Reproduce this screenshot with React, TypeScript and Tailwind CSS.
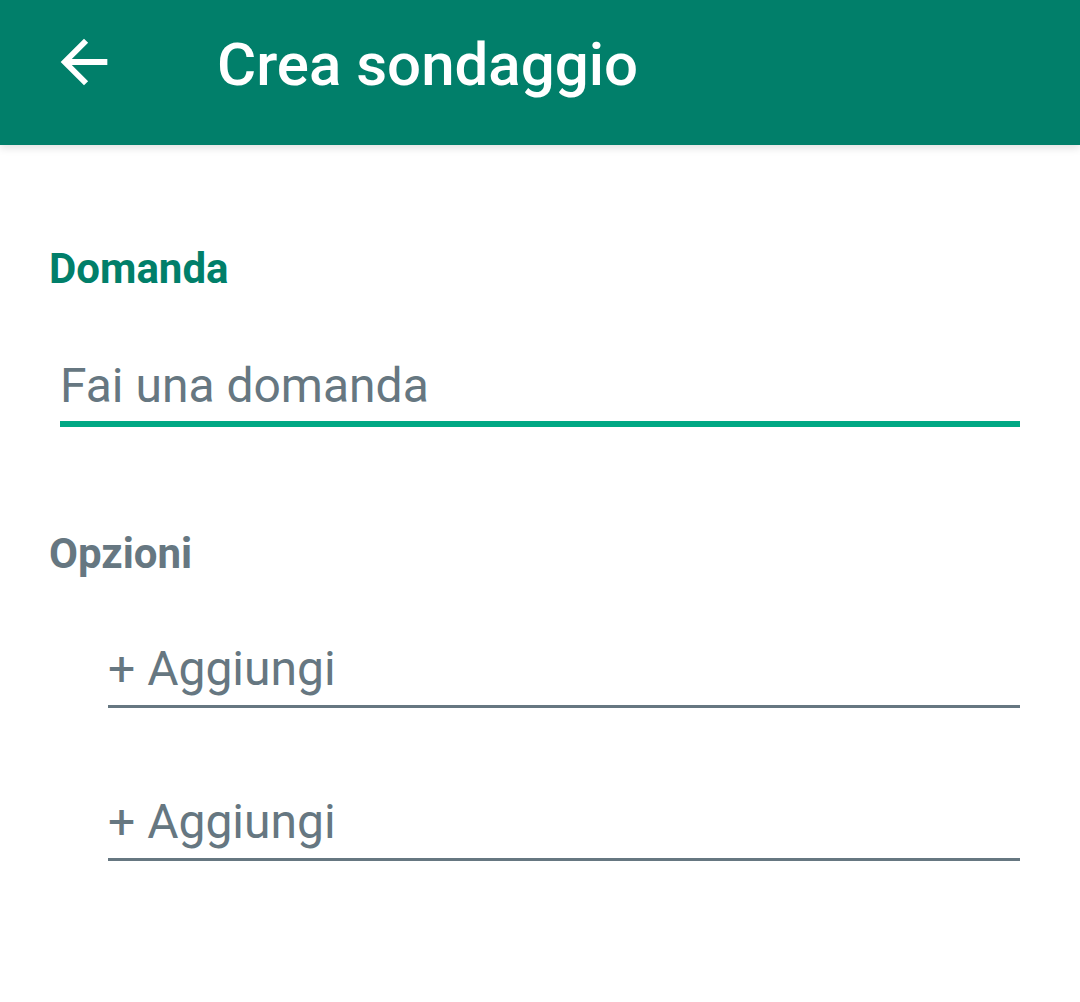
export default function App() {
  return (
    <div className="w-[1080px] h-[1002px] bg-white overflow-hidden font-['Roboto',sans-serif]">
      <header className="relative h-[145px] bg-[#017f6a] flex items-start shadow-[0_3px_8px_rgba(0,0,0,0.12)]">
        <div className="w-[217px] pl-[49px] pt-[27px] flex">
          <svg width="70" height="70" viewBox="0 0 24 24" fill="white">
            <path d="M20 11H7.83l5.59-5.59L12 4l-8 8 8 8 1.41-1.41L7.83 13H20v-2z" />
          </svg>
        </div>
        <h1 className="pt-[35px] text-white text-[60px] font-medium leading-none">Crea sondaggio</h1>
      </header>

      <main className="pl-[49px] pr-[60px]">
        <div className="mt-[96px] text-[42px] font-bold leading-[56px] text-[#017f6a]">Domanda</div>
        <div className="mt-[61px] ml-[11px] border-b-[6px] border-[#00a884] pb-[7px]">
          <div className="text-[48px] leading-[56px] text-[#667781]">Fai una domanda</div>
        </div>

        <div className="mt-[99px] text-[42px] font-bold leading-[56px] text-[#667781]">Opzioni</div>
        <div className="ml-[59px] mt-[59px] flex flex-col gap-[86px]">
          <div className="border-b-[3px] border-[#667781] pb-[8px]">
            <div className="text-[48px] leading-[56px] text-[#667781]">+ Aggiungi</div>
          </div>
          <div className="border-b-[3px] border-[#667781] pb-[8px]">
            <div className="text-[48px] leading-[56px] text-[#667781]">+ Aggiungi</div>
          </div>
        </div>
      </main>
    </div>
  );
}
